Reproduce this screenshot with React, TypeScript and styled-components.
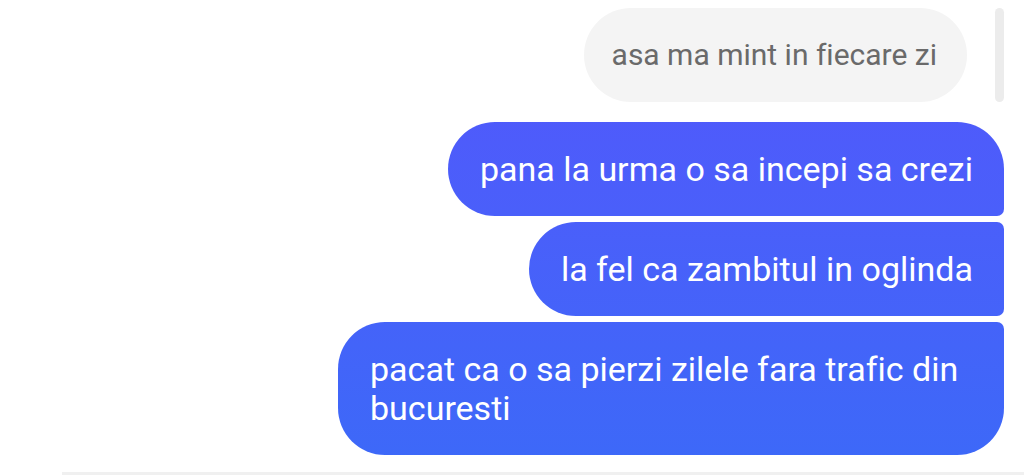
import React from "react";
import styled, { createGlobalStyle } from "styled-components";

const GlobalStyle = createGlobalStyle`
  html, body {
    margin: 0;
    padding: 0;
    background: #ffffff;
  }
  body {
    font-family: Roboto, "Noto Sans", "Liberation Sans", sans-serif;
    font-variant-ligatures: none;
    -webkit-font-smoothing: antialiased;
  }
`;

type Corner = "round" | "tight";

interface IBubbleProps {
  $tr: Corner;
  $br: Corner;
}

const messages: { text: string; tr: Corner; br: Corner }[] = [
  { text: "pana la urma o sa incepi sa crezi", tr: "round", br: "tight" },
  { text: "la fel ca zambitul in oglinda", tr: "tight", br: "tight" },
  {
    text: "pacat ca o sa pierzi zilele fara trafic din bucuresti",
    tr: "tight",
    br: "round",
  },
];

const App: React.FC = () => {
  return (
    <>
      <GlobalStyle />
      <ChatStyle>
        <ReceivedRow>
          <GrayBubble>asa ma mint in fiecare zi</GrayBubble>
          <ReplyBar />
        </ReceivedRow>
        <SentGroup>
          {messages.map((m) => (
            <BlueBubble key={m.text} $tr={m.tr} $br={m.br}>
              {m.text}
            </BlueBubble>
          ))}
        </SentGroup>
      </ChatStyle>
      <Divider />
    </>
  );
};

export default App;

const radius = (c: Corner) => (c === "round" ? "47px" : "7px");

const ChatStyle = styled.div`
  display: flex;
  flex-direction: column;
  align-items: flex-end;
  padding: 8px 20px 0 0;
  height: 464px;
  box-sizing: border-box;
`;

const ReceivedRow = styled.div`
  display: flex;
  align-items: stretch;
  gap: 28px;
  margin-bottom: 20px;
`;

const GrayBubble = styled.div`
  background: #f4f4f4;
  color: #6a6a6a;
  font-size: 30px;
  line-height: 40px;
  padding: 27px 30px 27px 28px;
  border-radius: 47px;
`;

const ReplyBar = styled.div`
  width: 9px;
  border-radius: 5px;
  background: #ececec;
`;

const SentGroup = styled.div`
  display: flex;
  flex-direction: column;
  align-items: flex-end;
  gap: 6px;
`;

const BlueBubble = styled.div<IBubbleProps>`
  max-width: 603px;
  padding: 28px 31px 27px 32px;
  color: #ffffff;
  font-size: 34px;
  line-height: 39px;
  border-radius: 47px ${(p) => radius(p.$tr)} ${(p) => radius(p.$br)} 47px;
  background: linear-gradient(180deg, #5356fc 0%, #4a5ffa 45%, #3c69f8 100%);
  background-attachment: fixed;
`;

const Divider = styled.div`
  margin-left: 62px;
  height: 3px;
  background: #f0f0f0;
  margin-top: 8px;
`;
